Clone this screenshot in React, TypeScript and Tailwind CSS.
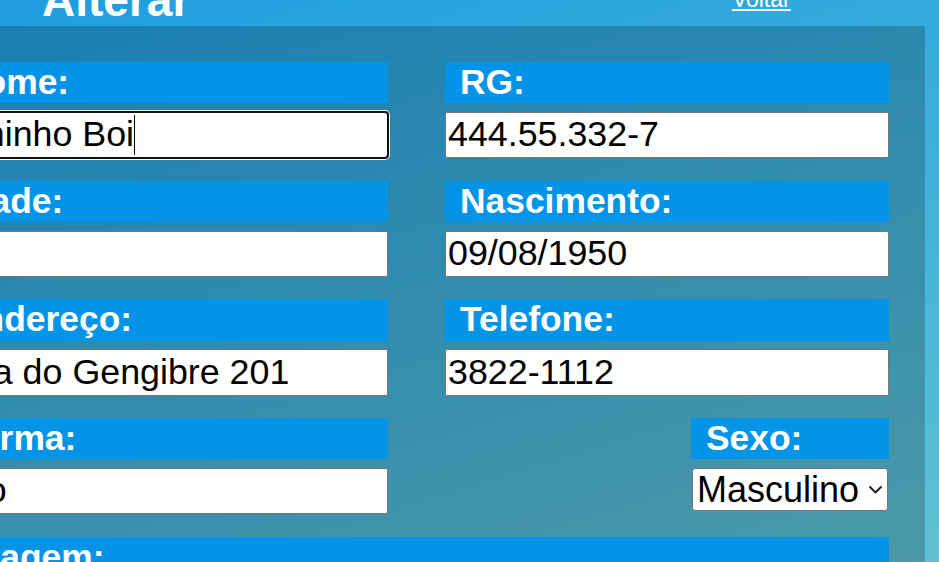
import React from "react";

type FieldProps = {
  label: string;
  value?: string;
  focused?: boolean;
};

function Label({ children, className = "" }: { children: React.ReactNode; className?: string }) {
  return (
    <div
      className={
        "h-[41.4px] bg-[#0394e8] pl-[15px] text-[35.4px] font-bold leading-[41.4px] text-white " +
        className
      }
    >
      {children}
    </div>
  );
}

function Field({ label, value = "", focused = false }: FieldProps) {
  return (
    <div className="flex flex-col">
      <Label>{label}</Label>
      <div className="relative mt-[8.5px]">
        <input
          readOnly
          defaultValue={value}
          className={
            focused
              ? "block h-[46.3px] w-full rounded-[3px] border border-[#767676] bg-white px-[2px] text-[35.8px] text-black caret-transparent outline-2 outline-[#101010] -outline-offset-1 shadow-[0_0_0_2px_#ffffff]"
              : "block h-[46.3px] w-full rounded-[2px] border border-[#767676] bg-white px-[2px] text-[35.8px] text-black outline-none"
          }
        />
        {focused && (
          <span className="pointer-events-none absolute left-[190px] top-[3px] h-[40px] w-px bg-black" />
        )}
      </div>
    </div>
  );
}

export default function App() {
  return (
    <div className="h-[562px] w-full overflow-hidden bg-[linear-gradient(163deg,#1e9ee0,#5fc1d3)] font-['Liberation_Sans',Arial,sans-serif]">
      <header className="flex h-[26px] items-start">
        <h1 className="ml-[42px] mt-[-23.2px] text-[46px] font-bold leading-none text-white">
          Alterar
        </h1>
        <a
          href="#"
          className="ml-auto mr-[148.3px] mt-[-12px] text-[23px] leading-none text-white underline"
        >
          Voltar
        </a>
      </header>

      <main className="ml-[-92px] w-[1017px] bg-black/20 p-[36px]">
        <form className="grid grid-cols-[444px_444px] gap-x-[57px] gap-y-[22.47px]">
          <Field label="Nome:" value="Juninho Boi" focused />
          <Field label="RG:" value="444.55.332-7" />
          <Field label="Idade:" value="" />
          <Field label="Nascimento:" value="09/08/1950" />
          <Field label="Endereço:" value="Rua do Gengibre 201" />
          <Field label="Telefone:" value="3822-1112" />
          <Field label="Turma:" value="Info" />

          <div className="flex flex-col items-end">
            <Label className="w-[198px]">Sexo:</Label>
            <div
              role="combobox"
              aria-expanded="false"
              className="mr-px mt-[8.5px] flex h-[43px] w-[196px] items-center justify-between rounded-[3px] border border-[#767676] bg-white pl-[4px] pr-[5.5px] text-[36px] leading-[41.4px] text-black"
            >
              <span>Masculino</span>
              <svg width="13" height="8" viewBox="0 0 13 8" fill="none" className="mt-[2px]">
                <polyline
                  points="1,1 6.5,6.5 12,1"
                  stroke="#1f1f1f"
                  strokeWidth="1.8"
                  strokeLinecap="round"
                  strokeLinejoin="round"
                />
              </svg>
            </div>
          </div>

          <div className="col-span-2 flex flex-col">
            <Label>Imagem:</Label>
            <div className="mt-[8.5px] h-[46.3px] w-full rounded-[2px] border border-[#767676] bg-white" />
          </div>
        </form>
      </main>
    </div>
  );
}
